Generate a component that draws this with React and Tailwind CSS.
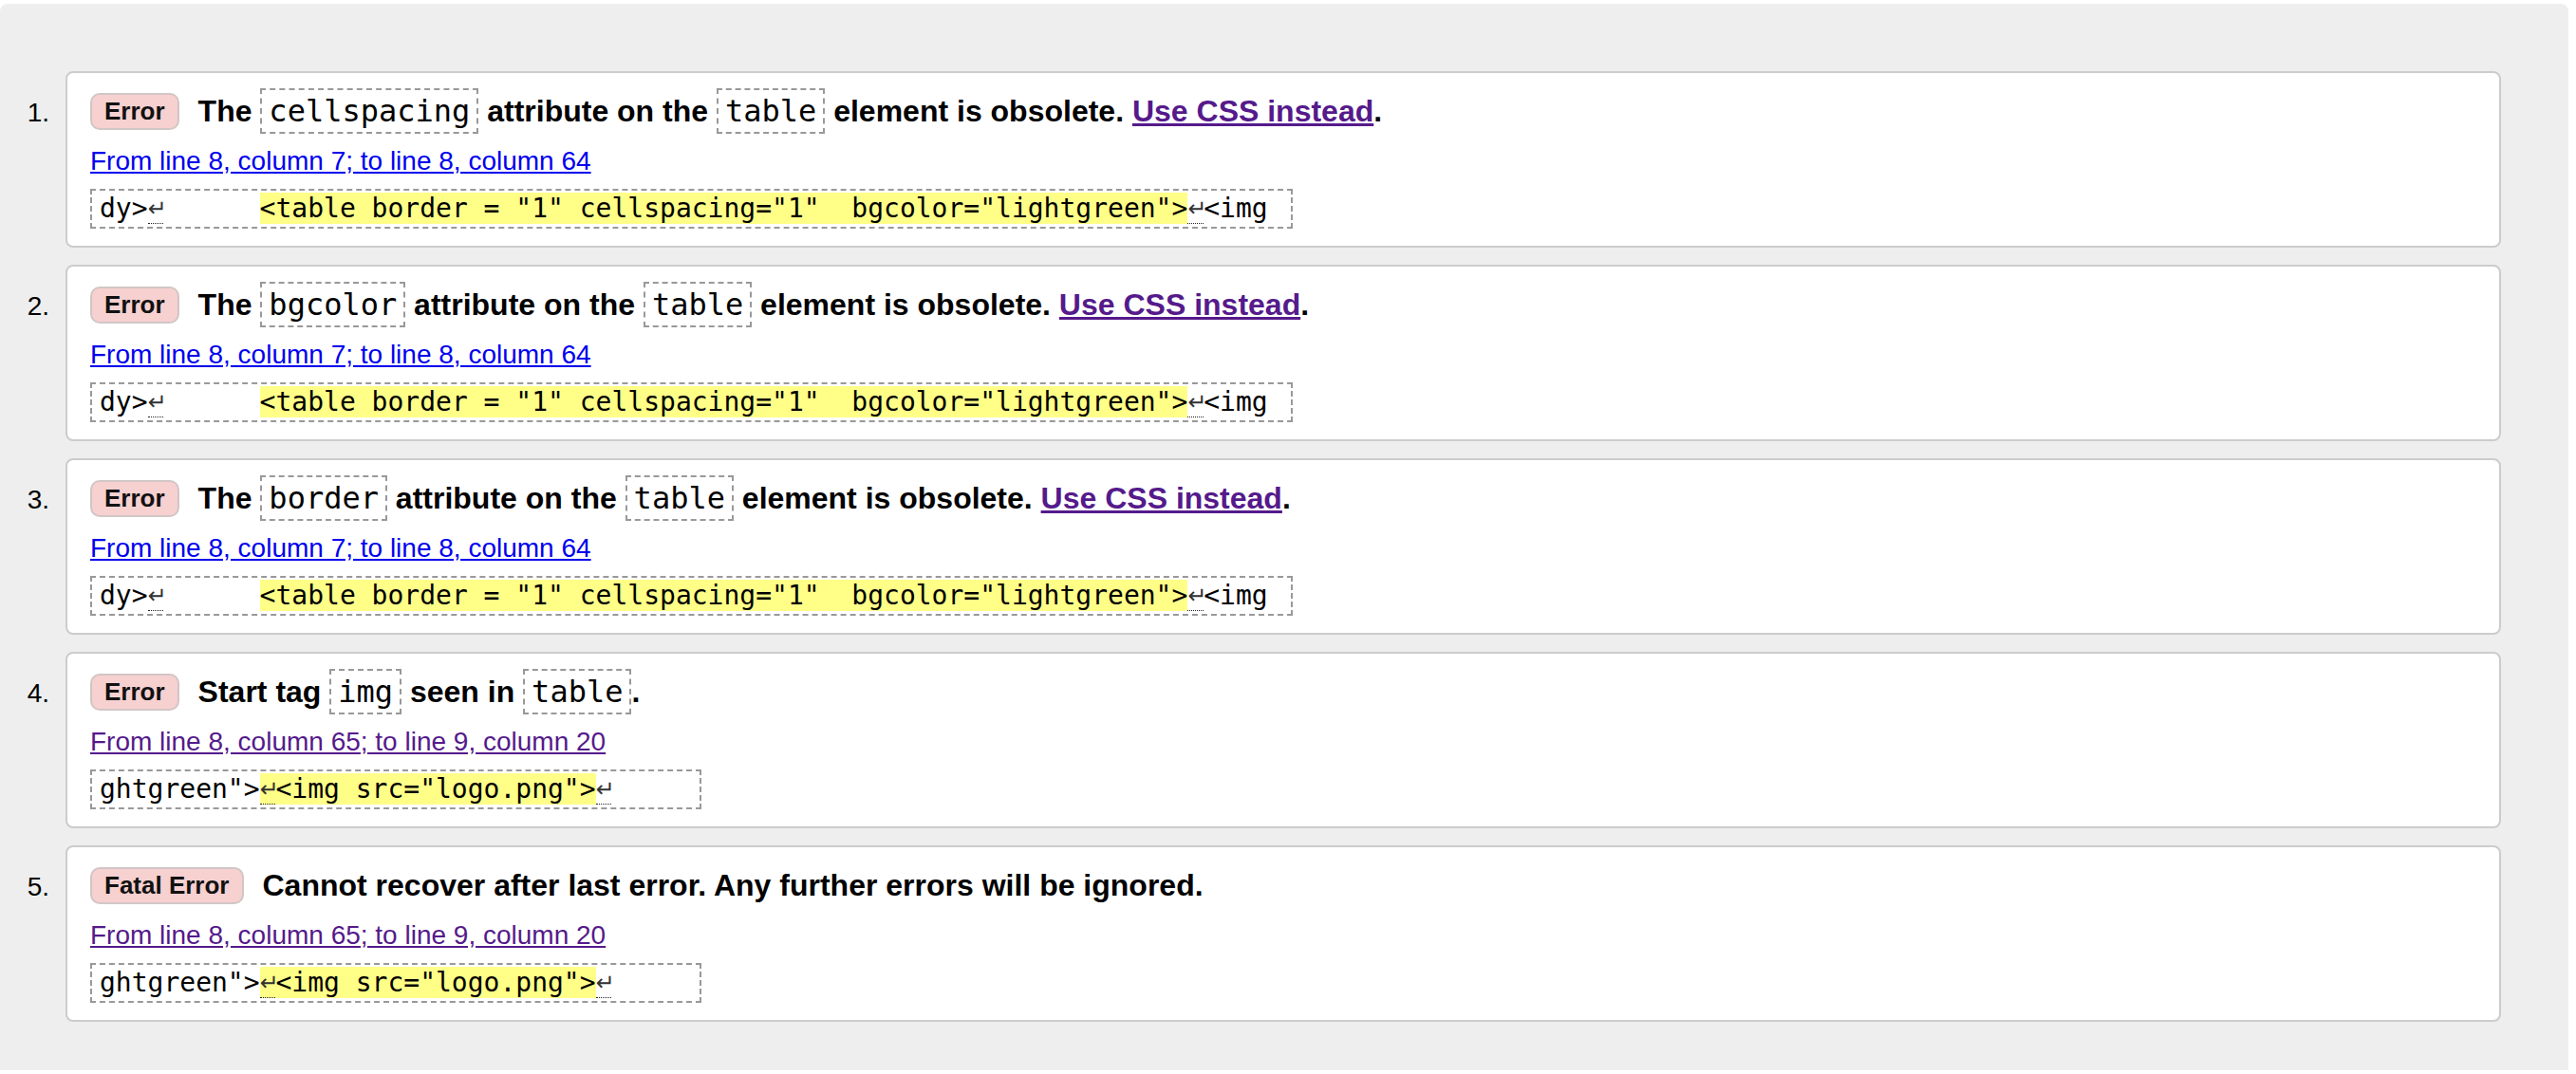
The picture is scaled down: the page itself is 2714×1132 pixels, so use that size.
const LINK_A = 'From line 8, column 7; to line 8, column 64';
const LINK_B = 'From line 8, column 65; to line 9, column 20';

const MESSAGES = [
  {
    type: 'Error',
    title: [{ t: 'The ' }, { c: 'cellspacing' }, { t: ' attribute on the ' }, { c: 'table' }, { t: ' element is obsolete. ' }, { a: 'Use CSS instead' }, { t: '.' }],
    link: LINK_A,
    visited: false,
    extract: 'a',
  },
  {
    type: 'Error',
    title: [{ t: 'The ' }, { c: 'bgcolor' }, { t: ' attribute on the ' }, { c: 'table' }, { t: ' element is obsolete. ' }, { a: 'Use CSS instead' }, { t: '.' }],
    link: LINK_A,
    visited: false,
    extract: 'a',
  },
  {
    type: 'Error',
    title: [{ t: 'The ' }, { c: 'border' }, { t: ' attribute on the ' }, { c: 'table' }, { t: ' element is obsolete. ' }, { a: 'Use CSS instead' }, { t: '.' }],
    link: LINK_A,
    visited: false,
    extract: 'a',
  },
  {
    type: 'Error',
    title: [{ t: 'Start tag ' }, { c: 'img' }, { t: ' seen in ' }, { c: 'table' }, { t: '.' }],
    link: LINK_B,
    visited: true,
    extract: 'b',
  },
  {
    type: 'Fatal Error',
    title: [{ t: 'Cannot recover after last error. Any further errors will be ignored.' }],
    link: LINK_B,
    visited: true,
    extract: 'b',
  },
];

// line-feed marker shown in the source extract
function Lf() {
  return (
    <span className="inline-block w-[16.86px] h-[32px] align-top text-center text-[24px] leading-[32px] text-[#333] border-b border-dotted border-[#222] font-['DejaVu_Sans',sans-serif]">
      ↵
    </span>
  );
}

function Extract({ kind }) {
  return (
    <div className="w-fit border-2 border-dashed border-[#999] px-[8px] py-[3px] leading-[32px] text-[28px] whitespace-pre text-black font-['DejaVu_Sans_Mono',monospace]">
      {kind === 'a' ? (
        <>
          dy&gt;<Lf />{'      '}
          <span className="bg-[#ffff88]">{'<table border = "1" cellspacing="1"  bgcolor="lightgreen">'}</span>
          <Lf />{'<img '}
        </>
      ) : (
        <>
          {'ghtgreen">'}
          <span className="bg-[#ffff88]"><Lf />{'<img src="logo.png">'}</span>
          <Lf />{'     '}
        </>
      )}
    </div>
  );
}

function Message({ n, msg }) {
  return (
    <li className="flex items-baseline">
      <div className="w-[52px] shrink-0 text-right text-[28px] text-black">{n}.</div>
      <div className="ml-[17px] flex-1 bg-white border-2 border-[#ccc] rounded-[8px] pl-[24px] pr-[24px] pt-[16px] pb-[18px]">
        <div className="leading-[48px] text-[32px] font-bold text-black whitespace-nowrap">
          <span className="inline-block align-[2px] h-[39px] leading-[35px] px-[13px] mr-[20px] text-[26px] font-bold text-[#111] bg-[#f7d0d0] border-2 border-[#d2c6c6] rounded-[10px]">
            {msg.type}
          </span>
          {msg.title.map((p, i) => {
            if (p.c)
              return (
                <code key={i} className="font-['DejaVu_Sans_Mono',monospace] font-normal text-[32px] border-2 border-dashed border-[#999] px-[7px] py-[3px]">
                  {p.c}
                </code>
              );
            if (p.a)
              return (
                <a key={i} href="#" className="text-[#551a8b] underline">
                  {p.a}
                </a>
              );
            return <span key={i}>{p.t}</span>;
          })}
        </div>
        <div className="mt-[11px] leading-[36px] text-[28px]">
          <a href="#" className={msg.visited ? 'text-[#551a8b] underline' : 'text-[#0000ee] underline'}>
            {msg.link}
          </a>
        </div>
        <div className="mt-[11px]">
          <Extract kind={msg.extract} />
        </div>
      </div>
    </li>
  );
}

export default function App() {
  return (
    <div className="bg-white min-h-[1132px] pt-[4px] pr-[8px] font-['Liberation_Sans',Arial,sans-serif]">
      <div className="bg-[#eeeeee] rounded-t-[8px] pt-[71px] pb-[51px] pr-[71px]">
        <ol className="flex flex-col gap-[18px]">
          {MESSAGES.map((m, i) => (
            <Message key={i} n={i + 1} msg={m} />
          ))}
        </ol>
      </div>
    </div>
  );
}
